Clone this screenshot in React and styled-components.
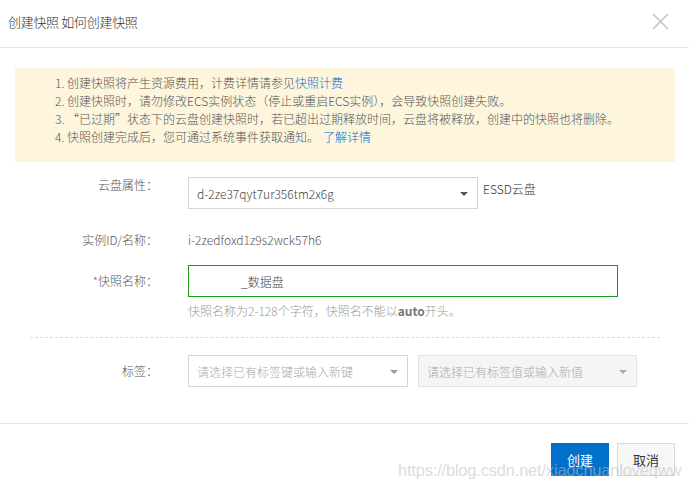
import React from "react";
import styled, { createGlobalStyle } from "styled-components";

const Global = createGlobalStyle`
  html, body { margin: 0; padding: 0; background: #fff; }
  body { font-family: "Noto Sans CJK SC", "Noto Sans", sans-serif; }
  * { box-sizing: border-box; }
`;

const Dialog = styled.div`
  position: relative;
  width: 689px;
  height: 490px;
  display: flex;
  flex-direction: column;
  background: #fff;
  color: #555;
  font-size: 12px;
  font-weight: 300;
  overflow: hidden;
`;

const Header = styled.div`
  height: 48px;
  flex: none;
  display: flex;
  align-items: center;
  justify-content: space-between;
  padding: 0 20px 4px 8px;
  border-bottom: 1px solid #e5e5e5;
`;

const Title = styled.div`
  font-size: 13px;
  color: #333;
  letter-spacing: -0.3px;
`;

const Close = styled.button`
  border: none;
  background: none;
  padding: 0;
  width: 17px;
  height: 17px;
  display: flex;
  cursor: pointer;
`;

const Body = styled.div`
  flex: 1;
  padding: 20px 14px 0 15px;
`;

const Notice = styled.div`
  background: #fdf6dd;
  height: 94px;
  padding: 6px 0 0 40px;
  line-height: 18px;
  font-size: 12px;
  color: #555;
`;

const Link = styled.a`
  color: #0070cc;
  text-decoration: none;
  margin-left: ${(p) => p.$gap || 0}px;
`;

const Row = styled.div`
  display: grid;
  grid-template-columns: 143px auto;
  column-gap: 30px;
  align-items: start;
  margin-top: ${(p) => p.$top}px;
`;

const Label = styled.div`
  text-align: right;
  line-height: ${(p) => p.$lh || 16}px;
  color: #555;
  white-space: nowrap;
`;

const Star = styled.span`
  color: #e0474e;
`;

const Controls = styled.div`
  display: flex;
  align-items: flex-start;
  gap: ${(p) => p.$gap || 0}px;
`;

const Select = styled.div`
  width: ${(p) => p.$w}px;
  height: 32px;
  border: 1px solid ${(p) => (p.$disabled ? "#e2e2e2" : "#d5d5d5")};
  background: ${(p) => (p.$disabled ? "#f5f5f5" : "#fff")};
  display: flex;
  align-items: center;
  justify-content: space-between;
  padding: 0 9px 0 8px;
  color: ${(p) => (p.$placeholder ? "#aaa" : "#444")};
  font-size: 12px;
`;

const Caret = styled.span`
  width: 0;
  height: 0;
  border-left: 4px solid transparent;
  border-right: 4px solid transparent;
  border-top: 4px solid ${(p) => p.$c || "#555"};
  margin-top: 2px;
`;

const Side = styled.div`
  padding: 4px 0 0 5px;
  line-height: 16px;
  color: #333;
`;

const Value = styled.div`
  line-height: 16px;
  color: #555;
`;

const Input = styled.div`
  width: 430px;
  height: 32px;
  border: 1px solid #1a9c1a;
  display: flex;
  align-items: center;
  padding-left: ${(p) => p.$indent}px;
  color: #444;
`;

const Help = styled.div`
  margin: 6px 0 0 173px;
  line-height: 16px;
  color: #999;
  b { color: #777; font-weight: 700; }
`;

const Divider = styled.div`
  margin: 18px 15px 0 15px;
  border-top: 1px dashed #dcdcdc;
`;

const Footer = styled.div`
  flex: none;
  height: 67px;
  border-top: 1px solid #e5e5e5;
  display: flex;
  justify-content: flex-end;
  align-items: flex-start;
  gap: 8px;
  padding: 19px 14px 0 0;
`;

const Button = styled.button`
  width: 58px;
  height: 33px;
  font-family: inherit;
  font-size: 13px;
  font-weight: 400;
  border: 1px solid ${(p) => (p.$primary ? "#0070cc" : "#d9d9d9")};
  background: ${(p) => (p.$primary ? "#0070cc" : "#f7f7f7")};
  color: ${(p) => (p.$primary ? "#fff" : "#333")};
  padding: 0;
  cursor: pointer;
`;

const Watermark = styled.div`
  position: absolute;
  left: 398px;
  top: 461px;
  font-family: "Liberation Sans", Arial, sans-serif;
  font-size: 16.5px;
  font-weight: 400;
  letter-spacing: -0.2px;
  color: rgba(190, 190, 190, 0.55);
  pointer-events: none;
  white-space: nowrap;
`;

export default function App() {
  return (
    <>
      <Global />
      <Dialog>
        <Header>
          <Title>创建快照 如何创建快照</Title>
          <Close aria-label="关闭">
            <svg width="17" height="17" viewBox="0 0 17 17">
              <path d="M1 1 L16 16 M16 1 L1 16" stroke="#c4c4c4" strokeWidth="1.6" fill="none" />
            </svg>
          </Close>
        </Header>
        <Body>
          <Notice>
            <div>
              1. 创建快照将产生资源费用，计费详情请参见<Link href="#">快照计费</Link>
            </div>
            <div>2. 创建快照时，请勿修改ECS实例状态（停止或重启ECS实例），会导致快照创建失败。</div>
            <div>3. “已过期”状态下的云盘创建快照时，若已超出过期释放时间，云盘将被释放，创建中的快照也将删除。</div>
            <div>
              4. 快照创建完成后，您可通过系统事件获取通知。
              <Link href="#" $gap={4}>了解详情</Link>
            </div>
          </Notice>

          <Row $top={15}>
            <Label>云盘属性：</Label>
            <Controls>
              <Select $w={290}>
                <span>d-2ze37qyt7ur356tm2x6g</span>
                <Caret />
              </Select>
              <Side>ESSD云盘</Side>
            </Controls>
          </Row>

          <Row $top={23}>
            <Label>实例ID/名称：</Label>
            <Value>i-2zedfoxd1z9s2wck57h6</Value>
          </Row>

          <Row $top={17}>
            <Label $lh={32}>
              <Star>*</Star>快照名称：
            </Label>
            <Input $indent={52}>_数据盘</Input>
          </Row>
          <Help>
            快照名称为2-128个字符，快照名不能以<b>auto</b>开头。
          </Help>

          <Divider />

          <Row $top={17}>
            <Label $lh={32}>标签：</Label>
            <Controls $gap={10}>
              <Select $w={220} $placeholder>
                <span>请选择已有标签键或输入新键</span>
                <Caret $c="#999" />
              </Select>
              <Select $w={219} $placeholder $disabled>
                <span>请选择已有标签值或输入新值</span>
                <Caret $c="#aaa" />
              </Select>
            </Controls>
          </Row>
        </Body>
        <Footer>
          <Button $primary>创建</Button>
          <Button>取消</Button>
        </Footer>
        <Watermark>https://blog.csdn.net/xiaochuanloveqww</Watermark>
      </Dialog>
    </>
  );
}
